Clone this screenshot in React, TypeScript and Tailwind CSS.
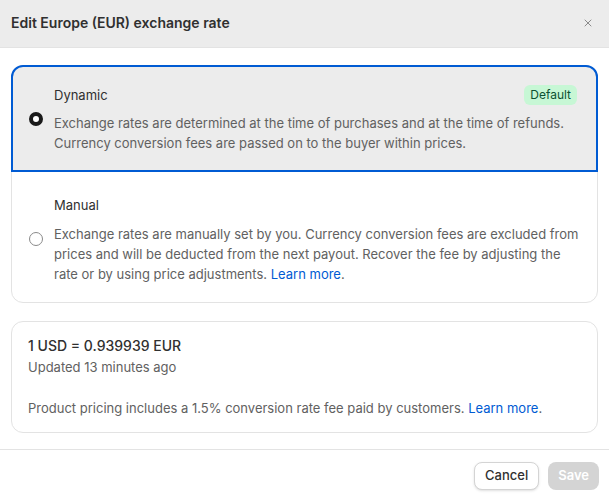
import { X } from "lucide-react";

function Radio({ checked }: { checked: boolean }) {
  return checked ? (
    <span className="block h-[14px] w-[14px] shrink-0 rounded-full border-[4px] border-[#1a1a1a] bg-white" />
  ) : (
    <span className="block h-[14px] w-[14px] shrink-0 rounded-full border border-[#8a8a8a] bg-white" />
  );
}

export default function App() {
  return (
    <div className="flex h-[501px] w-[609px] flex-col bg-white font-['Inter',sans-serif] text-[13px] text-[#303030]">
      <div className="flex h-[48px] shrink-0 items-center justify-between border-b border-[#e3e3e3] bg-[#ececec] pb-[2px] pl-[11px] pr-[15px]">
        <h1 className="text-[14px] font-semibold text-[#303030]">Edit Europe (EUR) exchange rate</h1>
        <X className="h-[12px] w-[12px] text-[#8a8a8a]" strokeWidth={2} />
      </div>

      <div className="flex flex-1 flex-col gap-[18px] px-[11px] pt-[17px]">
        <div className="rounded-xl border border-[#e3e3e3]">
          <div className="-m-px flex items-center gap-[11px] rounded-t-xl border-2 border-[#005bd3] bg-[#ececec] pb-[17px] pl-[16px] pr-[19px] pt-[18px]">
            <Radio checked />
            <div className="flex-1">
              <div className="flex items-center justify-between">
                <span className="leading-[20px] text-[#303030]">Dynamic</span>
                <span className="rounded-md bg-[#c7f7d5] px-[6px] text-[12px] leading-[20px] text-[#0c5132]">Default</span>
              </div>
              <p className="mt-[8px] leading-[20px] text-[#616161]">
                Exchange rates are determined at the time of purchases and at the time of refunds. Currency conversion fees are passed on to the buyer within prices.
              </p>
            </div>
          </div>
          <div className="flex items-center gap-[11px] pb-[18px] pl-[17px] pr-[11px] pt-[24px]">
            <Radio checked={false} />
            <div className="flex-1">
              <span className="leading-[20px] text-[#303030]">Manual</span>
              <p className="mt-[8px] leading-[20px] text-[#616161]">
                Exchange rates are manually set by you. Currency conversion fees are excluded from prices and will be deducted from the next payout. Recover the fee by adjusting the rate or by using price adjustments.{" "}
                <a className="text-[#005bd3]">Learn more</a>.
              </p>
            </div>
          </div>
        </div>

        <div className="rounded-xl border border-[#e3e3e3] px-[16px] pb-[14px] pt-[14px]">
          <p className="text-[14px] font-medium leading-[20px] text-[#303030]">1 USD = 0.939939 EUR</p>
          <p className="mt-px leading-[20px] text-[#616161]">Updated 13 minutes ago</p>
          <p className="mt-[21px] leading-[20px] text-[#616161]">
            Product pricing includes a 1.5% conversion rate fee paid by customers. <a className="text-[#005bd3]">Learn more</a>.
          </p>
        </div>
      </div>

      <div className="flex h-[52px] shrink-0 items-center justify-end gap-[9px] border-t border-[#e3e3e3] pl-[11px] pr-[10px]">
        <button className="h-[28px] rounded-lg border border-[#d4d4d4] bg-white px-[10px] text-[13px] font-medium text-[#303030] shadow-sm">
          Cancel
        </button>
        <button className="h-[28px] rounded-lg bg-[#d4d4d4] px-[10px] text-[13px] font-semibold text-white">Save</button>
      </div>
    </div>
  );
}
